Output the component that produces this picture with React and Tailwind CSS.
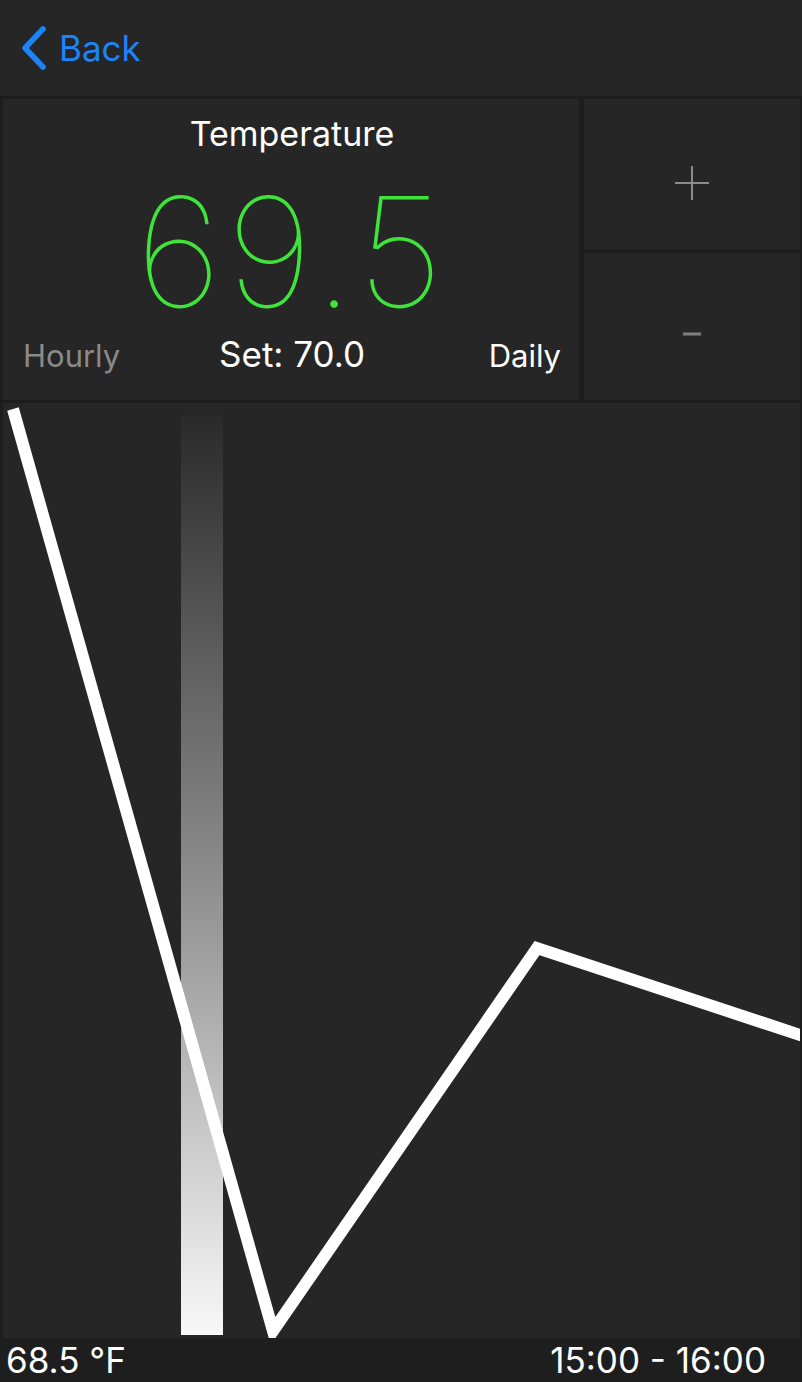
import React from 'react';

const font = { fontFamily: '"Helvetica Neue", Inter, "Liberation Sans", sans-serif' };

function Chart() {
  // coordinates are page pixels; the viewBox starts at the chart's top-left corner
  return (
    <svg className="block h-full w-full" viewBox="3 403 797 935" preserveAspectRatio="none">
      <defs>
        <linearGradient id="bar" x1="0" y1="0" x2="0" y2="1">
          <stop offset="0" stopColor="#2a2a2a" />
          <stop offset="0.5" stopColor="#8c8c8c" />
          <stop offset="1" stopColor="#f8f8f8" />
        </linearGradient>
      </defs>
      <rect x="181" y="415" width="42" height="920" fill="url(#bar)" />
      <polyline
        points="13,409 273,1331 537,948 806,1037"
        fill="none"
        stroke="#ffffff"
        strokeWidth="12"
        strokeLinejoin="miter"
      />
    </svg>
  );
}

export default function App() {
  return (
    <div className="flex h-[1382px] w-[802px] flex-col overflow-hidden bg-[#1d1d1d]" style={font}>
      {/* Nav bar */}
      <header className="flex h-[96px] items-center bg-[#262626] pl-[20px]">
        <button className="flex items-center gap-[13px] text-[#1c84f8]">
          <svg width="26" height="44" viewBox="0 0 26 44">
            <path d="M23 3 L5 22 L23 41" fill="none" stroke="#1c84f8" strokeWidth="5.5" strokeLinecap="round" strokeLinejoin="round" />
          </svg>
          <span className="text-[35px] leading-none">Back</span>
        </button>
      </header>

      {/* Reading + set point controls */}
      <div className="mt-[3px] flex h-[301px] gap-[5px] px-[3px] pr-[2px]">
        <div className="flex w-[576px] flex-col bg-[#262626] pl-[20px] pr-[18px]">
          <div className="mt-[18px] text-center text-[34px] leading-none text-white">Temperature</div>
          <div className="mt-[41px] text-center text-[152px] font-thin leading-[120px] tracking-[5px] text-[#3ee43a]">69.5</div>
          <div className="mt-[25px] grid grid-cols-[1fr_auto_1fr] items-baseline leading-none">
            <span className="text-[31px] text-[#8a8a8a]">Hourly</span>
            <span className="text-[35px] text-white">Set: 70.0</span>
            <span className="text-right text-[31px] text-white">Daily</span>
          </div>
        </div>
        <div className="flex flex-1 flex-col gap-[4px]">
          <button className="flex flex-1 items-center justify-center bg-[#262626] pt-[18px]">
            <svg width="36" height="36" viewBox="0 0 36 36">
              <path d="M18 1 V35 M1 18 H35" stroke="#8c8c8c" strokeWidth="2" />
            </svg>
          </button>
          <button className="flex flex-1 items-center justify-center bg-[#262626] pt-[16px]">
            <svg width="20" height="6" viewBox="0 0 20 6">
              <path d="M1 3 H19" stroke="#808080" strokeWidth="3" />
            </svg>
          </button>
        </div>
      </div>

      {/* Chart */}
      <div className="mt-[3px] ml-[3px] mr-[2px] flex-1 bg-[#262626]">
        <Chart />
      </div>

      {/* Footer readout */}
      <footer className="flex h-[44px] items-center justify-between bg-[#1e1e1e] pl-[6px] pr-[36px] text-[35px] leading-none text-white">
        <span>68.5 °F</span>
        <span>15:00 - 16:00</span>
      </footer>
    </div>
  );
}
